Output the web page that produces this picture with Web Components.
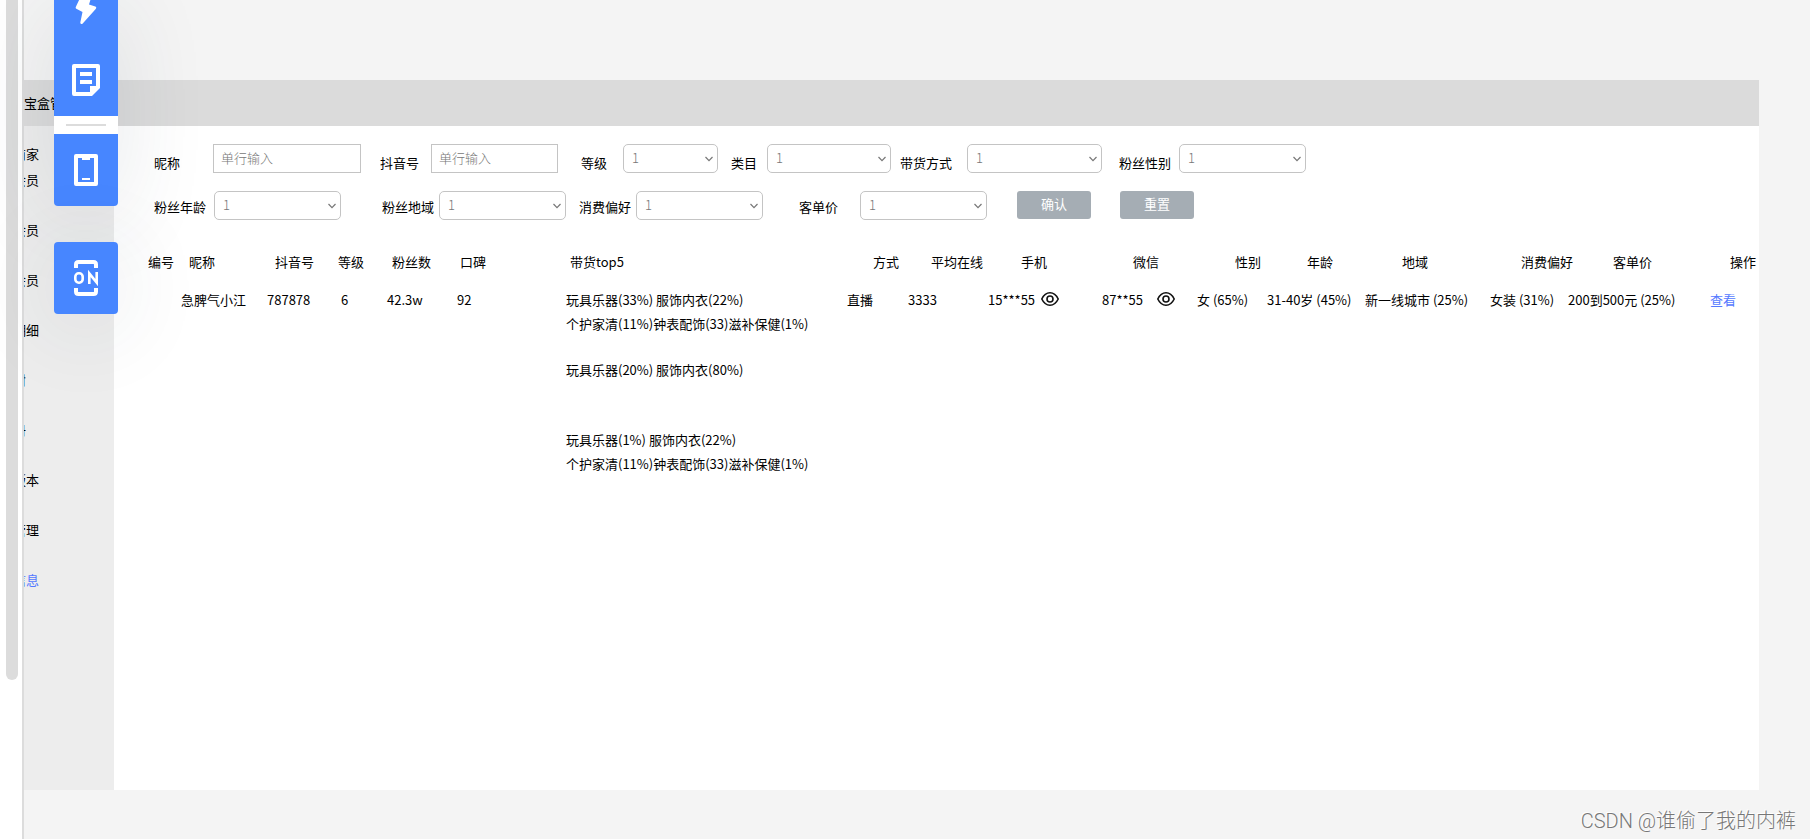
<!DOCTYPE html>
<html lang="zh-CN">
<head>
<meta charset="utf-8">
<title>百宝盒管理</title>
<style>
html,body{height:100%;margin:0}
body{font:13px/24px "Noto Sans CJK SC","Noto Sans",sans-serif;color:#000;background:#f4f4f4;overflow:hidden}
</style>
</head>
<body>
<preview-stage>
  <page-header slot="header">宝盒管</page-header>
  <side-nav slot="nav"></side-nav>
  <filter-bar slot="main"></filter-bar>
  <anchor-table slot="main"></anchor-table>
</preview-stage>
<tool-rail></tool-rail>
<water-mark>CSDN @谁偷了我的内裤</water-mark>
<script>
function define(name, html, init) {
  customElements.define(name, class extends HTMLElement {
    constructor() {
      super();
      const t = document.createElement('template');
      t.innerHTML = html;
      this.attachShadow({ mode: 'open' }).append(t.content.cloneNode(true));
    }
    connectedCallback() { if (init) init(this, this.shadowRoot); }
  });
}

define('preview-stage', `
<style>
:host{display:flex;height:100%}
.gutter{flex:none;width:16px;padding-left:6px;background:#fff;border-right:2px solid #dcdcdc}
.thumb{width:12px;height:81%;background:#dcdcdc;border-radius:0 0 6px 6px}
.canvas{flex:1;min-width:0;overflow:hidden;padding:80px 51px 49px 0;display:flex;flex-direction:column}
.body{flex:1;display:flex;min-height:0}
main{flex:1;min-width:0;background:#fff}
</style>
<div class="gutter"><div class="thumb"></div></div>
<div class="canvas">
  <slot name="header"></slot>
  <div class="body"><slot name="nav"></slot><main><slot name="main"></slot></main></div>
</div>`);

define('page-header', `
<style>
:host{display:flex;align-items:center;height:46px;background:#dbdbdb;white-space:nowrap}
</style><slot></slot>`);

define('side-nav', `
<style>
:host{display:block;flex:none;width:90px;background:#ededed}
nav{display:flex;flex-direction:column;gap:26px;padding-top:16px}
.group{display:flex;flex-direction:column;gap:2px}
a{display:flex;justify-content:flex-end;width:15px;overflow:hidden;white-space:nowrap;color:inherit;text-decoration:none}
a.short{width:2px}
a.on{color:#5579ff}
</style>
<nav>
  <div class="group"><a href="#">商家</a><a href="#">会员</a></div>
  <a href="#">会员</a><a href="#">会员</a><a href="#">明细</a>
  <a href="#" class="short">封</a><a href="#" class="short">册</a>
  <a href="#">版本</a><a href="#">管理</a><a href="#" class="on">信息</a>
</nav>`);

define('form-field', `
<style>
:host{display:flex;align-items:flex-start;min-width:0;padding-right:var(--after,0px)}
label{flex:none;width:var(--label);padding-top:var(--drop,7px);white-space:nowrap}
.control{flex:1;min-width:0;display:grid;align-items:center}
.control>*{grid-area:1/1}
input,select{box-sizing:border-box;width:100%;height:29px;margin:0;padding:0 7px 2px;font:300 13px/24px "Noto Sans CJK SC",sans-serif;color:#777;background:#fff;border:1px solid #c4c4c4;border-radius:0;outline:0}
input::placeholder{color:#777;opacity:1}
select{appearance:none;padding-left:8px;border-radius:5px}
svg{justify-self:end;margin-right:5px;width:8px;height:6px;pointer-events:none}
</style>
<label for="c"></label><div class="control"></div>`, (el, root) => {
  root.querySelector('label').textContent = el.getAttribute('label');
  root.querySelector('.control').innerHTML = el.hasAttribute('text')
    ? '<input id="c" type="text" placeholder="单行输入">'
    : '<select id="c"><option>1</option></select><svg viewBox="0 0 8 6" fill="none" stroke="#777" stroke-width="1.200"><path d="M.5 1 4 4.700 7.500 1"/></svg>';
});

define('action-button', `
<style>
:host{display:block}
button{box-sizing:border-box;width:100%;height:28px;border:0;border-radius:3px;padding:0 0 2px;background:#a5adb4;color:#fff;font:inherit}
</style><button type="button"><slot></slot></button>`);

define('filter-bar', `
<style>
:host{display:block;padding:18px 0 0 40px}
.row{display:grid}
.one{grid-template-columns:226fr 201fr 150fr 169fr 219fr 187fr 453fr}
.two{grid-template-columns:228fr 197fr 220fr 188fr 30fr 74fr 29fr 74fr 565fr;margin-top:16px;--drop:4px}
</style>
<div class="row one">
  <form-field text label="昵称" style="--label:59px;--after:19px"></form-field>
  <form-field text label="抖音号" style="--label:51px;--after:23px"></form-field>
  <form-field label="等级" style="--label:42px;--after:13px"></form-field>
  <form-field label="类目" style="--label:36px;--after:9px"></form-field>
  <form-field label="带货方式" style="--label:67px;--after:17px"></form-field>
  <form-field label="粉丝性别" style="--label:60px"></form-field>
</div>
<div class="row two">
  <form-field label="粉丝年龄" style="--label:60px;--after:41px"></form-field>
  <form-field label="粉丝地域" style="--label:57px;--after:13px"></form-field>
  <form-field label="消费偏好" style="--label:57px;--after:36px"></form-field>
  <form-field label="客单价" style="--label:61px"></form-field>
  <span></span><action-button>确认</action-button>
  <span></span><action-button>重置</action-button>
</div>`);

define('eye-button', `
<style>
:host{display:inline-flex}
button{display:flex;padding:0 0 2px;border:0;background:none}
svg{display:block;width:18px;height:14px}
</style>
<button type="button" aria-label="显示"><svg viewBox="0 0 18 14" fill="none" stroke="#111" stroke-width="1.600"><path d="M.8 7C2.700 3 5.600.8 9 .8S15.300 3 17.200 7C15.300 11 12.400 13.200 9 13.200S2.700 11 .8 7Z"/><circle cx="9" cy="7" r="3"/></svg></button>`);

define('anchor-table', `
<style>
:host{display:block;padding:30px 0 0 34px}
table,thead,tbody{display:block}
tr{display:grid}
th,td{padding:0;font-weight:400;text-align:left;white-space:nowrap}
thead tr{grid-template-columns:41fr 86fr 63fr 54fr 68fr 110fr 303fr 58fr 90fr 112fr 102fr 72fr 95fr 119fr 92fr 117fr 29fr}
tbody tr{grid-template-columns:33fr 86fr 74fr 46fr 70fr 109fr 281fr 61fr 80fr 114fr 95fr 70fr 98fr 125fr 78fr 142fr 49fr;padding-top:14px}
p{margin:0 0 22px;min-height:48px}
.contact{display:flex;align-items:center;height:24px;gap:6px}
.contact.wide{gap:14px}
a{color:#5579ff;text-decoration:none}
</style>
<table>
<thead><tr><th>编号</th><th>昵称</th><th>抖音号</th><th>等级</th><th>粉丝数</th><th>口碑</th><th>带货top5</th><th>方式</th><th>平均在线</th><th>手机</th><th>微信</th><th>性别</th><th>年龄</th><th>地域</th><th>消费偏好</th><th>客单价</th><th>操作</th></tr></thead>
<tbody><tr><td></td><td>急脾气小江</td><td>787878</td><td>6</td><td>42.3w</td><td>92</td>
<td><p>玩具乐器(33%) 服饰内衣(22%)<br>个护家清(11%)钟表配饰(33)滋补保健(1%)</p><p>玩具乐器(20%) 服饰内衣(80%)</p><p>玩具乐器(1%) 服饰内衣(22%)<br>个护家清(11%)钟表配饰(33)滋补保健(1%)</p></td>
<td>直播</td><td>3333</td><td class="contact">15***55<eye-button></eye-button></td><td class="contact wide">87**55<eye-button></eye-button></td>
<td>女 (65%)</td><td>31-40岁 (45%)</td><td>新一线城市 (25%)</td><td>女装 (31%)</td><td>200到500元 (25%)</td><td><a href="#">查看</a></td></tr></tbody>
</table>`);

define('tool-rail', `
<style>
:host{position:absolute;top:0;left:54px;width:64px;display:flex;flex-direction:column;gap:36px}
.group{border-radius:0 0 4px 4px;box-shadow:0 10px 90px rgba(39,54,78,.12)}
.group.solo{border-radius:4px}
button{display:flex;align-items:center;justify-content:center;width:100%;height:72px;padding:0;border:0;background:#4786ff}
button.cut{height:44px;align-items:flex-start}
.group button:last-child{border-radius:0 0 4px 4px}
.solo button:last-child{border-radius:4px}
.split{display:flex;align-items:center;justify-content:center;height:18px;background:#fff}
hr{width:40px;margin:0;border:0;border-top:2px solid #dcdcdc}
svg{display:block}
</style>
<div class="group">
  <button type="button" class="cut" aria-label="快捷"><svg width="22" height="25" viewBox="0 0 22 25" fill="#fff"><path d="M5-2 .8 7Q.3 8.500 1.800 9L7.500 12 5.300 22.500Q5.500 24.700 7.500 23.700L20.700 9Q22 7.500 20.300 6.500L14 4.500 16-2Z"/></svg></button>
  <button type="button" aria-label="笔记"><svg width="28" height="32" viewBox="0 0 28 32"><path fill="#fff" fill-rule="evenodd" d="M2 0H26Q28 0 28 2V24L20 32H2Q0 32 0 30V2Q0 0 2 0ZM4 4V28H18V22H24V4ZM8 8H20V12H8ZM8 16H20V20H8Z"/></svg></button>
  <div class="split"><hr></div>
  <button type="button" aria-label="手机"><svg width="24" height="32" viewBox="0 0 24 32"><path fill="#fff" fill-rule="evenodd" d="M2 0H22Q24 0 24 2V30Q24 32 22 32H2Q0 32 0 30V2Q0 0 2 0ZM4 4V28H20V4H16V6H8V4ZM8 24H16V26H8Z"/></svg></button>
</div>
<div class="group solo">
  <button type="button" aria-label="开启"><svg width="26" height="36" viewBox="0 0 26 36"><g fill="none" stroke="#fff" stroke-width="4"><path d="M3 8V4.500Q3 2 5.500 2H20.500Q23 2 23 4.500V8M3 28V31.500Q3 34 5.500 34H20.500Q23 34 23 31.500V28"/></g><g fill="none" stroke="#fff" stroke-width="2.600"><rect x="2.300" y="13.300" width="7.400" height="9.400" rx="3.400"/><path d="M16.300 24V13.500L23.700 22.500V12"/></g></svg></button>
</div>`);

define('water-mark', `
<style>
:host{position:absolute;right:14px;bottom:4px;font:300 20px/28px Roboto,"Noto Sans CJK SC",sans-serif;color:#777;text-shadow:-1px -1px 0 #fff;white-space:nowrap}
</style><slot></slot>`);
</script>
</body>
</html>
